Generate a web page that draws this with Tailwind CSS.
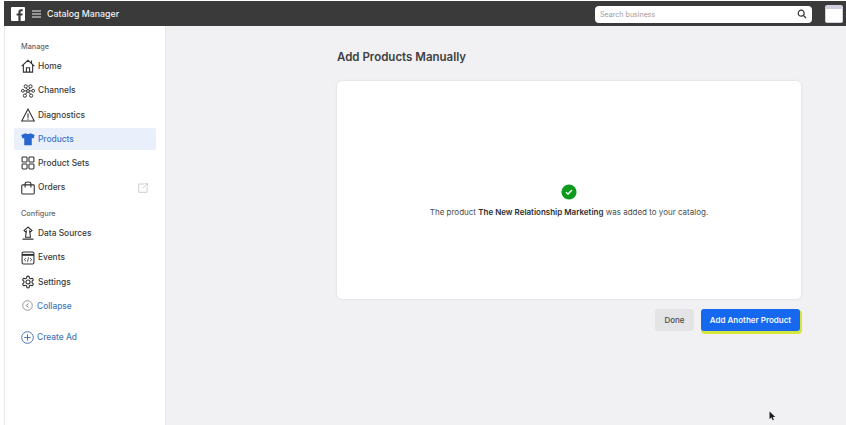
<!DOCTYPE html>
<html lang="en">
<head>
  <meta charset="UTF-8" />
  <title>Catalog Manager</title>
  <script src="https://cdn.jsdelivr.net/npm/@tailwindcss/browser@4"></script>
</head>
<body class="w-[846px] h-[425px] overflow-hidden bg-[#f1f0f2] font-['Inter','Liberation_Sans',sans-serif] text-[#3a3b3d]">
  <div class="flex flex-col h-full pl-1 pt-px bg-white">
    <!-- top bar -->
    <header class="h-[25px] shrink-0 bg-[#3a3a3a] flex items-center pl-[7px] pr-[3px] text-[#f2f2f2]">
      <svg width="14" height="14" viewBox="0 0 14 14" class="shrink-0">
        <rect width="14" height="14" rx="1" fill="#fff"/>
        <path d="M9.6 14V8.6h1.8l.3-2.1H9.6V5.2c0-.6.2-1 1-1h1.1V2.3c-.2 0-.9-.1-1.6-.1-1.6 0-2.7 1-2.7 2.8v1.5H5.6v2.1h1.8V14z" fill="#3a3a3a"/>
      </svg>
      <svg width="9" height="8" viewBox="0 0 9 8" class="ml-[7px] shrink-0" stroke="#eee" stroke-width="1"><path d="M0 1h9M0 4h9M0 7h9"/></svg>
      <span class="ml-[6px] text-[8.8px] font-medium">Catalog Manager</span>
      <div class="ml-auto mt-px w-[217px] h-[17px] rounded-[4px] bg-white flex items-center px-[5px]">
        <span class="mt-[2px] text-[7.1px] leading-[10px] text-[#9a9a9c]">Search business</span>
        <svg width="10" height="10" viewBox="0 0 10 10" class="ml-auto" fill="none" stroke="#333" stroke-width="1.2"><circle cx="4.2" cy="4.2" r="3"/><path d="M6.5 6.5 9 9"/></svg>
      </div>
      <div class="ml-[13px] w-[18px] h-[18px] rounded-[2px] bg-white border-t-[4px] border-x border-b border-[#cfcfe0]"></div>
    </header>

    <div class="flex flex-1 min-h-0">
      <!-- sidebar -->
      <aside class="w-[162px] shrink-0 bg-white border-l border-[#e8e8ea] border-r pt-[16px] text-[8.4px] font-medium">
        <div class="pl-[16px] text-[7.3px] text-[#66676a] h-[10px] leading-[10px]">Manage</div>
        <nav class="mt-[2px] px-[9px]">
          <a class="flex items-center h-[24.4px] pl-[7px] gap-[3px]">
            <svg width="14" height="14" viewBox="0 0 13 13" fill="none" stroke="#2f3032"><path d="M.6 6.6 6.5 1.2l5.9 5.4M2.2 5.4v6.8h8.6V5.4M5 12.2V8.2h3v4M9.8 1.4v2.6"/></svg>
            <span>Home</span>
          </a>
          <a class="flex items-center h-[24.4px] pl-[7px] gap-[3px]">
            <svg width="14" height="14" viewBox="0 0 13 13" fill="none" stroke="#2f3032" stroke-width=".9"><circle cx="6.5" cy="6.5" r="1.3"/><circle cx="4.4" cy="2.2" r="1.5"/><circle cx="8.8" cy="2.2" r="1.5"/><circle cx="1.7" cy="6.3" r="1.3"/><circle cx="11.3" cy="6.3" r="1.3"/><circle cx="3.6" cy="10.8" r="1.5"/><circle cx="9.4" cy="10.8" r="1.5"/><path d="M5 3.6 5.9 5.3M8.2 3.6 7.2 5.3M3 6.4h2.2M7.8 6.4H10M4.4 9.4 5.7 7.6M8.6 9.4 7.4 7.6"/></svg>
            <span>Channels</span>
          </a>
          <a class="flex items-center h-[24.4px] pl-[7px] gap-[3px]">
            <svg width="14" height="14" viewBox="0 0 13 13" fill="none" stroke="#2f3032"><path d="M6.5 1 .7 12h11.6zM6.5 5v4M6.5 9.8v1"/></svg>
            <span>Diagnostics</span>
          </a>
          <a class="flex items-center h-[22px] my-[1px] pl-[7px] gap-[3px] bg-[#e9f0fc] text-[#3b74c9] rounded-[2px]">
            <svg width="14" height="14" viewBox="0 0 13 13" fill="#2767cf"><path d="M4.2 1.2c.8.9 3.8.9 4.6 0l3.9 1.6-1 3.2-1.7-.5v6.8H3V5.5l-1.7.5-1-3.2z"/></svg>
            <span>Products</span>
          </a>
          <a class="flex items-center h-[24.4px] pl-[7px] gap-[3px]">
            <svg width="14" height="14" viewBox="0 0 13 13" fill="none" stroke="#2f3032"><rect x="1" y="1" width="4.6" height="4.6" rx=".8"/><rect x="7.4" y="1" width="4.6" height="4.6" rx=".8"/><rect x="1" y="7.4" width="4.6" height="4.6" rx=".8"/><rect x="7.4" y="7.4" width="4.6" height="4.6" rx=".8"/></svg>
            <span>Product Sets</span>
          </a>
          <a class="flex items-center h-[24.4px] pl-[7px] gap-[3px]">
            <svg width="14" height="14" viewBox="0 0 13 13" fill="none" stroke="#2f3032"><path d="M1.5 3.6h10a.8.8 0 0 1 .8.8v6.8a.8.8 0 0 1-.8.8h-10a.8.8 0 0 1-.8-.8V4.400a.8.8 0 0 1 .8-.8zM3.800 6V2.500c0-2 5.400-2 5.400 0V6"/></svg>
            <span>Orders</span>
            <svg width="10" height="10" viewBox="0 0 10 10" class="ml-auto mr-[8px]" fill="none" stroke="#c9cacc" stroke-width=".9"><path d="M6 1H.7v8.300H9V4M4.500 5.500 9.300.7M6.600.6h2.800v2.800"/></svg>
          </a>
        </nav>
        <div class="pl-[16px] mt-[9px] text-[7.3px] text-[#66676a] h-[10px] leading-[10px]">Configure</div>
        <nav class="mt-[2px] px-[9px]">
          <a class="flex items-center h-[24.4px] pl-[7px] gap-[3px]">
            <svg width="14" height="14" viewBox="0 0 13 13" fill="none" stroke="#2f3032"><path d="M6.500 1 2.800 4.200l1.300 1.200.9-.6-.8 5.700h4.600l-.8-5.700.9.600 1.300-1.200zM1.400 12.200h10.200"/></svg>
            <span>Data Sources</span>
          </a>
          <a class="flex items-center h-[24.4px] pl-[7px] gap-[3px]">
            <svg width="14" height="14" viewBox="0 0 13 13" fill="none" stroke="#2f3032"><rect x="1" y="1" width="11" height="11" rx="1.200"/><path d="M1 3.600h11" stroke-width="1.800"/><path d="M4.600 6.400 3 8l1.600 1.600M8.400 6.400 10 8 8.400 9.600M7 6 6 10" stroke-width=".8"/></svg>
            <span>Events</span>
          </a>
          <a class="flex items-center h-[24.4px] pl-[7px] gap-[3px]">
            <svg width="14" height="14" viewBox="0 0 24 24" fill="none" stroke="#2f3032" stroke-width="1.900"><path d="M12.220 2h-.44a2 2 0 0 0-2 2v.18a2 2 0 0 1-1 1.730l-.43.25a2 2 0 0 1-2 0l-.15-.08a2 2 0 0 0-2.730.73l-.22.38a2 2 0 0 0 .73 2.730l.15.1a2 2 0 0 1 1 1.720v.51a2 2 0 0 1-1 1.740l-.15.09a2 2 0 0 0-.73 2.730l.22.38a2 2 0 0 0 2.730.73l.15-.08a2 2 0 0 1 2 0l.43.25a2 2 0 0 1 1 1.730V20a2 2 0 0 0 2 2h.44a2 2 0 0 0 2-2v-.18a2 2 0 0 1 1-1.730l.43-.25a2 2 0 0 1 2 0l.15.08a2 2 0 0 0 2.730-.73l.22-.39a2 2 0 0 0-.73-2.730l-.15-.08a2 2 0 0 1-1-1.740v-.5a2 2 0 0 1 1-1.740l.15-.09a2 2 0 0 0 .73-2.730l-.22-.38a2 2 0 0 0-2.730-.73l-.15.08a2 2 0 0 1-2 0l-.43-.25a2 2 0 0 1-1-1.730V4a2 2 0 0 0-2-2z"/><circle cx="12" cy="12" r="3.500"/></svg>
            <span>Settings</span>
          </a>
          <a class="flex items-center h-[23.4px] pl-[8px] gap-[4px] text-[#4a77b8]">
            <svg width="11" height="11" viewBox="0 0 11 11" fill="none" stroke="#8b8d91" stroke-width=".9"><circle cx="5.500" cy="5.500" r="4.800"/><path d="M6.300 3.500 4.300 5.500l2 2" stroke="#5c5e62"/></svg>
            <span>Collapse</span>
          </a>
        </nav>
        <a class="mt-[13px] ml-[16px] flex items-center gap-[3px] text-[#4a77b8]">
          <svg width="13" height="13" viewBox="0 0 13 13" fill="none" stroke="#4a77b8"><circle cx="6.500" cy="6.500" r="5.800"/><path d="M6.500 3.300v6.400M3.300 6.500h6.400"/></svg>
          <span>Create Ad</span>
        </a>
      </aside>

      <!-- main -->
      <main class="flex-1 bg-[#f1f0f2] pl-[171px] pt-[23px] relative">
        <h1 class="text-[11.500px] leading-[16px] font-semibold text-[#3f4042]">Add Products Manually</h1>
        <section class="mt-[16px] w-[464px] h-[218px] bg-white rounded-[5px] shadow-[0_0_3px_rgba(0,0,0,0.1)] flex flex-col items-center pt-[103px]">
          <svg width="16" height="16" viewBox="0 0 16 16"><circle cx="8" cy="8" r="7.600" fill="#0d9a1d"/><path d="M5 8.200 7 10l4-4" fill="none" stroke="#fff" stroke-width="1.400"/></svg>
          <p class="mt-[6px] text-[8px] leading-[12px] text-[#4a4b4d]">The product <b class="font-semibold text-[#2c2d2f]">The New Relationship Marketing</b> was added to your catalog.</p>
        </section>
        <div class="mt-[10px] w-[463px] flex justify-end items-center gap-[7px]">
          <button class="w-[39px] h-[22px] rounded-[3px] bg-[#e4e4e6] text-[8px] font-medium text-[#4a4b4d]">Done</button>
          <button class="w-[99px] h-[22px] rounded-[3px] bg-[#1669ee] text-[8px] font-semibold text-[#f5f7ff] shadow-[1px_2px_0_1px_#d6e63a]">Add Another Product</button>
        </div>
        <svg width="7" height="10" viewBox="0 0 7 10" class="absolute left-[603px] top-[385px]"><path d="M.5 .5v7.500l2-1.600 1.200 2.800 1.200-.5-1.200-2.700h2.600z" fill="#1c1c1c"/></svg>
      </main>
    </div>
  </div>
</body>
</html>
